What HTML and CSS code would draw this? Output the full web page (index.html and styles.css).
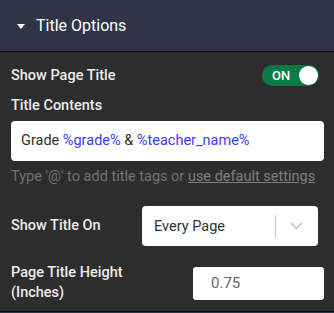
FILE: index.html
```html
<!DOCTYPE html>
<html lang="en">

<head>
    <meta charset="UTF-8">
    <title>Title Options</title>
    <meta name="viewport" content="width=device-width, initial-scale=1.0">
    <link rel="stylesheet" href="styles.css">
</head>

<body>
    <section class="panel">
        <header class="panel-header">
            <span class="caret"></span>
            <h2>Title Options</h2>
        </header>
        <div class="panel-body">
            <div class="row">
                <label class="label">Show Page Title</label>
                <button type="button" class="toggle">
                    <span class="toggle-text">ON</span>
                    <span class="knob"></span>
                </button>
            </div>
            <label class="label contents-label">Title Contents</label>
            <div class="text-field">
                Grade <span class="tag">%grade%</span> &amp; <span class="tag">%teacher_name%</span>
            </div>
            <p class="hint">Type '@' to add title tags or <a href="#">use default settings</a></p>
            <div class="row show-on">
                <label class="label">Show Title On</label>
                <div class="select">
                    <span class="select-value">Every Page</span>
                    <span class="select-sep"></span>
                    <svg class="chevron" width="13" height="8" viewBox="0 0 13 8">
                        <path d="M1 1 L6.5 6.5 L12 1" fill="none" stroke="#cccccc" stroke-width="1.8" />
                    </svg>
                </div>
            </div>
            <div class="row height-row">
                <label class="label">Page Title Height<br>(Inches)</label>
                <input type="text" class="number-input" value="0.75">
            </div>
        </div>
        <footer class="panel-foot"></footer>
    </section>
</body>

</html>
```

FILE: styles.css
```css
body {
    margin: 0;
    padding: 0;
    font-family: Roboto, 'Liberation Sans', Arial, sans-serif;
    background: #2d2d2d;
    color: #ececec;
    width: 334px;
    height: 313px;
    overflow: hidden;
}

.panel {
    display: flex;
    flex-direction: column;
    height: 313px;
}

.panel-header {
    display: flex;
    align-items: center;
    height: 51px;
    background: #2f3447;
    border-bottom: 1px solid #0c0c0c;
    padding-left: 17px;
    flex-shrink: 0;
}

.caret {
    width: 0;
    height: 0;
    border-left: 4px solid transparent;
    border-right: 4px solid transparent;
    border-top: 5px solid #ffffff;
    margin-right: 11px;
    margin-top: 1px;
}

.panel-header h2 {
    margin: 0;
    font-size: 16px;
    font-weight: 400;
    color: #ffffff;
}

.panel-body {
    flex: 1;
    padding: 13px 10px 0 11px;
}

.row {
    display: flex;
    align-items: center;
    justify-content: space-between;
}

.label {
    font-size: 14.5px;
    font-weight: 500;
    color: #ececec;
    line-height: 20px;
}

.toggle {
    display: flex;
    align-items: center;
    width: 57px;
    height: 21px;
    padding: 0 1px 0 10px;
    margin-right: 5px;
    border: none;
    border-radius: 11px;
    background: #0b7a44;
    font-family: inherit;
    box-sizing: border-box;
}

.toggle-text {
    flex: 1;
    text-align: left;
    font-size: 13px;
    font-weight: 500;
    color: #ffffff;
}

.knob {
    width: 19px;
    height: 19px;
    border-radius: 50%;
    background: #ffffff;
}

.contents-label {
    display: block;
    margin-top: 10px;
}

.text-field {
    margin-top: 5px;
    height: 40px;
    background: #ffffff;
    border-radius: 4px;
    padding-left: 10px;
    font-size: 14.5px;
    line-height: 40px;
    color: #333333;
    box-sizing: border-box;
}

.tag {
    color: #3d3df5;
}

.hint {
    margin: 6px 0 0;
    font-size: 14.5px;
    line-height: 20px;
    color: #727272;
    white-space: nowrap;
}

.hint a {
    color: #7e7e7e;
}

.show-on {
    margin-top: 19px;
    padding-right: 6px;
}

.select {
    display: flex;
    align-items: center;
    width: 176px;
    height: 40px;
    background: #ffffff;
    border-radius: 4px;
    padding-left: 12px;
    box-sizing: border-box;
}

.select-value {
    flex: 1;
    font-size: 14.5px;
    color: #333333;
}

.select-sep {
    width: 1px;
    height: 23px;
    background: #cccccc;
}

.chevron {
    margin: 0 15px 0 14px;
}

.height-row {
    margin-top: 17px;
}

.number-input {
    width: 131px;
    height: 33px;
    border: none;
    border-radius: 3px;
    padding-left: 18px;
    font-family: inherit;
    font-size: 15px;
    color: #666666;
    box-sizing: border-box;
    outline: none;
}

.panel-foot {
    height: 1px;
    border-top: 1px solid #0c0c0c;
    background: #2f3447;
    flex-shrink: 0;
}
```
